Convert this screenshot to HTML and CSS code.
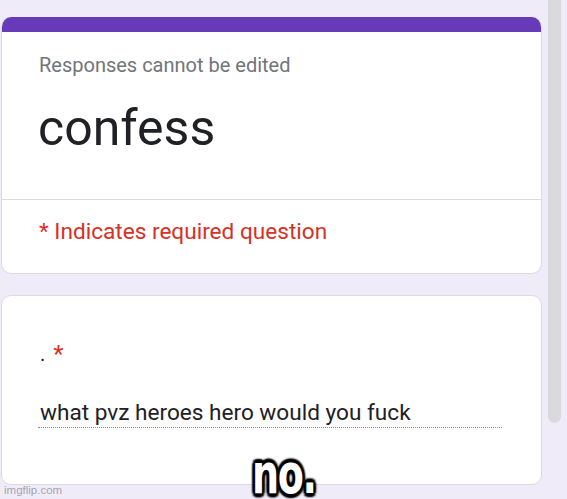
FILE: index.html
```html
<!DOCTYPE html>
<html lang="en">
<head>
    <meta charset="UTF-8">
    <meta name="viewport" content="width=device-width, initial-scale=1.0">
    <title>confess</title>
    <link rel="stylesheet" href="styles.css">
</head>
<body>
    <div class="page">
        <div class="form">
            <div class="card">
                <div class="card-top"></div>
                <div class="card-head">
                    <p class="note">Responses cannot be edited</p>
                    <h1 class="title">confess</h1>
                </div>
                <div class="card-required">
                    <p>* Indicates required question</p>
                </div>
            </div>

            <div class="card question">
                <p class="question-title">.<span class="star">*</span></p>
                <div class="answer">what pvz heroes hero would you fuck</div>
            </div>
        </div>
        <div class="scrollbar"></div>
    </div>

    <div class="caption"><span>no.</span></div>
    <div class="watermark">imgflip.com</div>
</body>
</html>
```

FILE: styles.css
```css
:root {
    --lilas: #f0ebf8;
    --roxo: #673ab7;
    --borda: #dadce0;
    --texto: #202124;
    --cinza: #70757a;
    --vermelho: #d93025;
}

body {
    margin: 0;
    height: 499px;
    overflow: hidden;
    background-color: var(--lilas);
    font-family: Roboto, "Noto Sans", sans-serif;
    color: var(--texto);
    position: relative;
}

p, h1 {
    margin: 0;
}

.page {
    display: flex;
    align-items: flex-start;
}

.form {
    margin-left: 1px;
    width: 541px;
    padding-top: 17px;
    display: flex;
    flex-direction: column;
    gap: 21px;
}

.card {
    background-color: white;
    border: 1px solid var(--borda);
    border-radius: 10px;
    overflow: hidden;
}

.card:first-child {
    border-top: none;
}

.card-top {
    height: 15px;
    background-color: var(--roxo);
}

.card-head {
    padding: 21px 24px 42px 37px;
    border-bottom: 1px solid var(--borda);
}

.note {
    font-size: 20px;
    line-height: 24px;
    color: var(--cinza);
}

.title {
    margin-top: 22px;
    font-size: 50px;
    line-height: 58px;
    font-weight: 400;
    margin-left: -1px;
}

.card-required {
    padding: 18px 24px 27px 37px;
    font-size: 22.6px;
    line-height: 28px;
    color: var(--vermelho);
}

.question {
    padding: 46px 36px 56px 36px;
}

.question-title {
    font-size: 20px;
    line-height: 24px;
    padding-left: 2px;
}

.star {
    color: var(--vermelho);
    padding-left: 8px;
    font-size: 24px;
    vertical-align: top;
}

.answer {
    margin-top: 33px;
    width: 462px;
    font-size: 22.6px;
    line-height: 28px;
    padding-left: 2px;
    border-bottom: 1px dotted #8a8e94;
}

.scrollbar {
    margin-left: 6px;
    width: 13px;
    height: 423px;
    background-color: #dadade;
    border-radius: 0 0 7px 7px;
}

.caption {
    position: absolute;
    left: 0;
    right: 0;
    top: 452px;
    text-align: center;
    font-family: "DejaVu Sans", "Liberation Sans", sans-serif;
    font-weight: bold;
    font-size: 56px;
    line-height: 44px;
    color: white;
}

.caption span {
    display: inline-block;
    transform: scaleX(0.68);
    letter-spacing: -2px;
    text-shadow:
        3px 3px 2px #000, -3px -3px 2px #000, 3px -3px 2px #000, -3px 3px 2px #000,
        0 4px 2px #000, 0 -4px 2px #000, 4px 0 2px #000, -4px 0 2px #000,
        0 0 4px #000;
}

.watermark {
    position: absolute;
    left: 4px;
    bottom: 3px;
    font-family: "Liberation Sans", Arial, sans-serif;
    font-size: 11.5px;
    color: rgba(120, 120, 120, 0.65);
}
```
